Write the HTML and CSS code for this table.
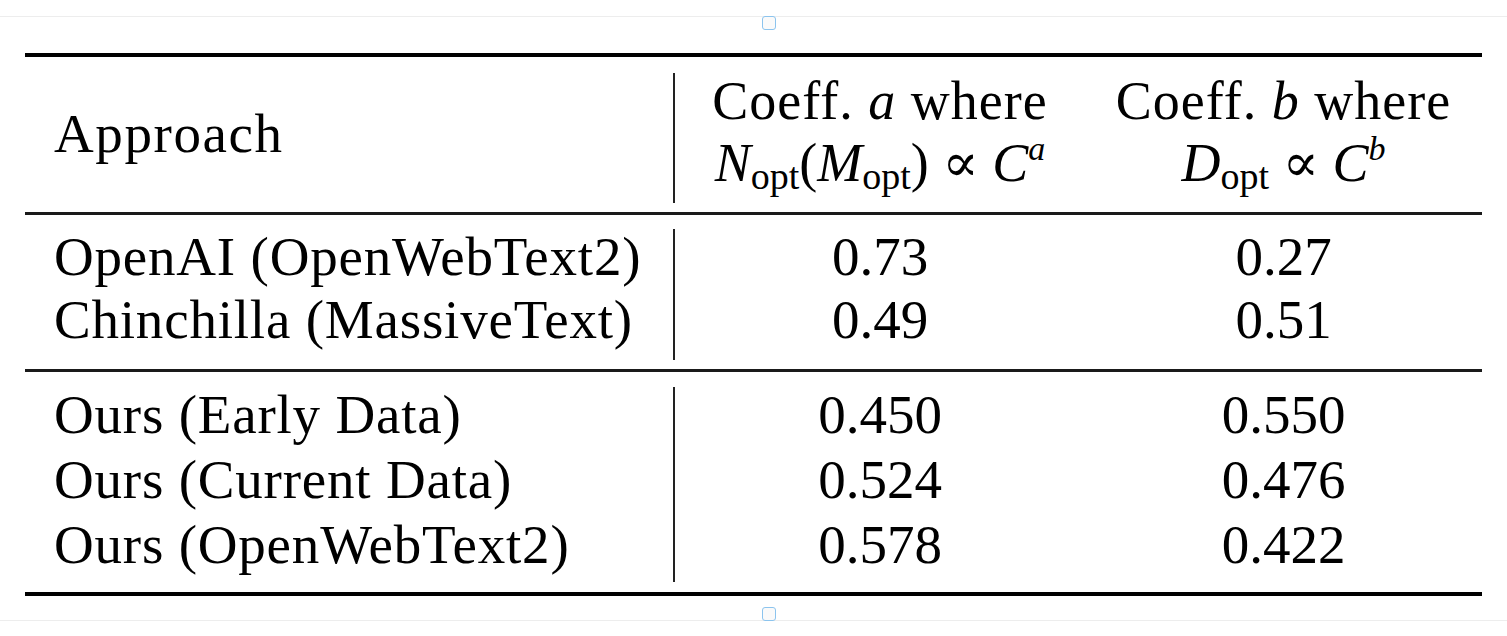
FILE: index.html
```html
<!DOCTYPE html>
<html lang="en">
<head>
  <meta charset="UTF-8" />
  <title>Scaling coefficients</title>
  <link rel="stylesheet" href="styles.css">
</head>
<body>
  <div class="frame">
    <span class="handle handle-top"></span>

    <div class="booktab">
      <div class="group head">
        <div class="col name">
          <div class="cell">Approach</div>
        </div>
        <div class="col num mid">
          <div class="cell">Coeff. <i>a</i> where</div>
          <div class="cell"><i>N</i><sub>opt</sub>(<i>M</i><sub>opt</sub>) ∝ <i>C</i><sup><i>a</i></sup></div>
        </div>
        <div class="col num last">
          <div class="cell">Coeff. <i>b</i> where</div>
          <div class="cell"><i>D</i><sub>opt</sub> ∝ <i>C</i><sup><i>b</i></sup></div>
        </div>
      </div>

      <div class="group prior">
        <div class="col name">
          <div class="cell">OpenAI (OpenWebText2)</div>
          <div class="cell">Chinchilla (MassiveText)</div>
        </div>
        <div class="col num mid">
          <div class="cell">0.73</div>
          <div class="cell">0.49</div>
        </div>
        <div class="col num last">
          <div class="cell">0.27</div>
          <div class="cell">0.51</div>
        </div>
      </div>

      <div class="group ours">
        <div class="col name">
          <div class="cell">Ours (Early Data)</div>
          <div class="cell">Ours (Current Data)</div>
          <div class="cell">Ours (OpenWebText2)</div>
        </div>
        <div class="col num mid">
          <div class="cell">0.450</div>
          <div class="cell">0.524</div>
          <div class="cell">0.578</div>
        </div>
        <div class="col num last">
          <div class="cell">0.550</div>
          <div class="cell">0.476</div>
          <div class="cell">0.422</div>
        </div>
      </div>
    </div>

    <span class="handle handle-bottom"></span>
  </div>
</body>
</html>
```

FILE: styles.css
```css
* { margin: 0; padding: 0; box-sizing: border-box; }

body {
  background: #ffffff;
  color: #000;
  font-family: "Liberation Serif", "DejaVu Serif", serif;
}

.frame {
  position: relative;
  margin-top: 16px;
  padding: 36px 25px 24px;
  border-top: 1px solid #ededed;
  border-bottom: 1px solid #ededed;
}

.handle {
  position: absolute;
  left: 762px;
  width: 14px;
  height: 14px;
  border: 1px solid #8cc4ee;
  border-radius: 3px;
  background: #fafafa;
}
.handle-top { top: -1px; }
.handle-bottom { bottom: -1px; }

.booktab {
  border-top: 4px solid #000;
  border-bottom: 4px solid #000;
  font-size: 55px;
}

.group {
  display: flex;
}

.col {
  display: flex;
  flex-direction: column;
}

.name {
  width: 650px;
  padding-left: 29px;
  border-right: 2px solid #222;
  letter-spacing: 0.8px;
}
.head .name { letter-spacing: 1.6px; }
.mid { width: 410px; }
.last { flex: 1; }
.num { text-align: center; }

.cell {
  line-height: 55px;
  white-space: nowrap;
}

/* header */
.head {
  padding: 16px 0 9px;
  border-bottom: 3px solid #1a1a1a;
}
.head .col { height: 130px; }
.head .name { padding-top: 33px; }
.head .num {
  padding-top: 2px;
  gap: 9px;
  font-size: 54px;
}
.head .num .cell { line-height: 53px; }
.head .num .cell:first-child { letter-spacing: 1px; }

sub, sup {
  font-size: 38px;
  line-height: 0;
  font-style: normal;
}
sub { vertical-align: -8px; }
sup { font-size: 34px; vertical-align: 21px; }

/* body groups */
.prior {
  padding: 14px 0 9px;
  border-bottom: 3px solid #1a1a1a;
}
.prior .col { gap: 8px; padding-bottom: 13px; }

.ours {
  padding: 15px 0 10px;
}
.ours .col { gap: 10px; padding-bottom: 10px; }
```
